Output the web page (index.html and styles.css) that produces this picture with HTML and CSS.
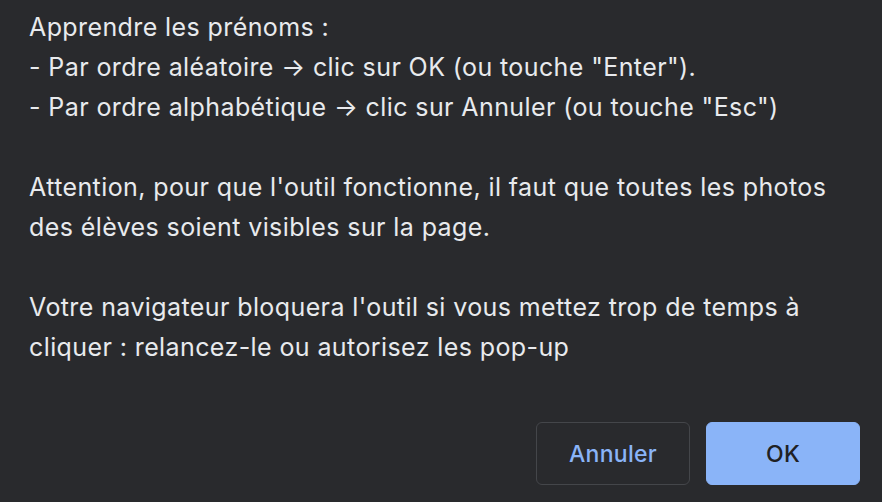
FILE: index.html
```html
<!DOCTYPE html>
<html lang="fr">
<head>
<meta charset="utf-8">
<link rel="stylesheet" href="styles.css">
</head>
<body>
<div class="dialog">
  <div class="message">
    <p>Apprendre les prénoms :<br>- Par ordre aléatoire → clic sur OK (ou touche "Enter").<br>- Par ordre alphabétique → clic sur Annuler (ou touche "Esc")</p>
    <p>Attention, pour que l'outil fonctionne, il faut que toutes les photos<br>des élèves soient visibles sur la page.</p>
    <p>Votre navigateur bloquera l'outil si vous mettez trop de temps à<br>cliquer : relancez-le ou autorisez les pop-up</p>
  </div>
  <div class="actions">
    <button class="btn btn-cancel">Annuler</button>
    <button class="btn btn-ok">OK</button>
  </div>
</div>
</body>
</html>
```
FILE: styles.css
```css
html, body {
  margin: 0;
  padding: 0;
  background: #292a2d;
}
body {
  width: 882px;
  height: 502px;
  overflow: hidden;
  font-family: Inter, "Noto Sans", sans-serif;
  color: #e8eaed;
}
.dialog {
  display: flex;
  flex-direction: column;
  height: 502px;
  box-sizing: border-box;
  padding: 7px 22px 17px 29px;
}
.message {
  flex: 1;
  font-size: 25px;
  letter-spacing: 0.4px;
  line-height: 40px;
}
.message p {
  margin: 0 0 40px 0;
  white-space: nowrap;
}
.message p:last-child {
  margin-bottom: 0;
}
.actions {
  display: flex;
  justify-content: flex-end;
  gap: 16px;
}
.btn {
  width: 154px;
  height: 63px;
  border-radius: 6px;
  font-family: Inter, "Noto Sans", sans-serif;
  font-size: 23px;
  font-weight: 500;
  letter-spacing: 0.3px;
  cursor: pointer;
}
.btn-cancel {
  background: #292a2d;
  border: 1px solid #44464a;
  color: #8ab4f8;
}
.btn-ok {
  background: #8ab4f8;
  border: 1px solid #8ab4f8;
  color: #202124;
}
```
